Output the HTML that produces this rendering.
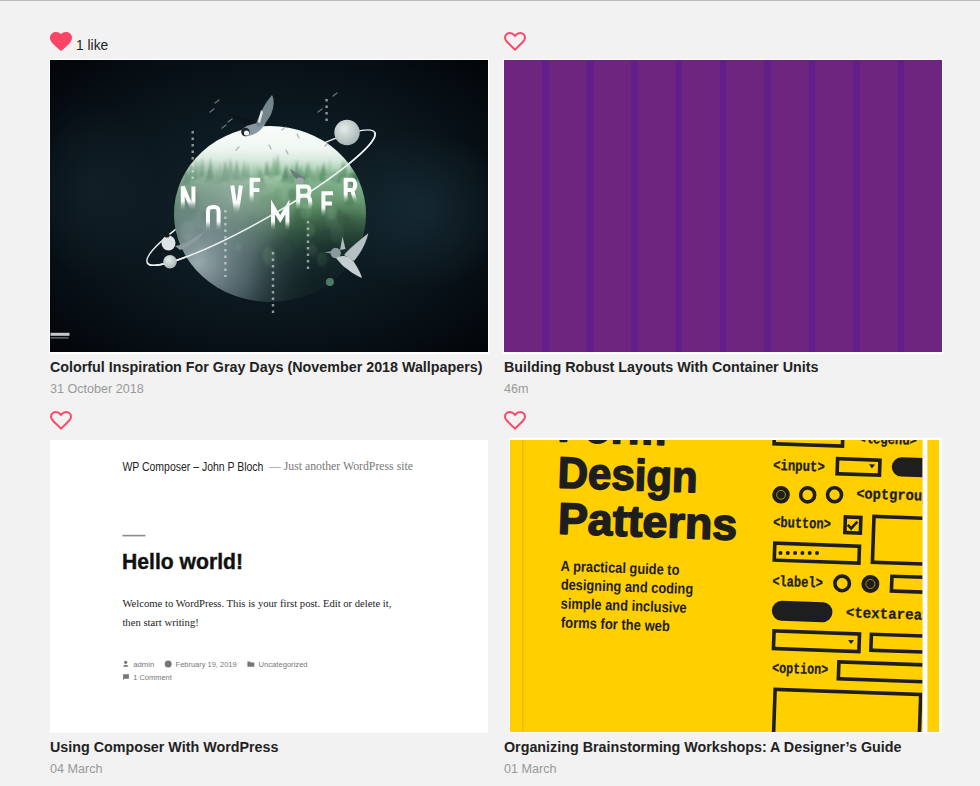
<!DOCTYPE html>
<html><head><meta charset="utf-8">
<style>
html,body{margin:0;padding:0;}
body{width:980px;height:786px;background:#f2f2f2;position:relative;overflow:hidden;font-family:"Liberation Sans",sans-serif;}
.topline{position:absolute;left:0;top:0;width:980px;height:1px;background:#bdbdbd;}
.heart{position:absolute;width:22px;height:19px;}
.likes{position:absolute;left:76px;top:38px;font-size:13.8px;color:#222;line-height:16px;white-space:nowrap;}
.frame{position:absolute;background:#fff;}
.img{position:absolute;overflow:hidden;}
.title{position:absolute;font-weight:bold;font-size:14.3px;color:#222;line-height:16px;white-space:nowrap;}
.date{position:absolute;font-size:12.6px;color:#999;line-height:14px;white-space:nowrap;}
</style></head><body>
<div class="topline"></div>

<!-- ROW 1 -->
<svg class="heart" style="left:50px;top:32px" viewBox="2 3 20 18.35" preserveAspectRatio="none"><path fill="#fb4466" d="M12 21.35l-1.45-1.32C5.4 15.36 2 12.28 2 8.5 2 5.42 4.42 3 7.5 3c1.740 0 3.41.81 4.5 2.09C13.09 3.81 14.76 3 16.5 3 19.58 3 22 5.42 22 8.5c0 3.78-3.4 6.86-8.55 11.54L12 21.35z"/></svg>
<div class="likes">1 like</div>
<svg class="heart" style="left:504px;top:32px" viewBox="0 0 22 19"><path fill="none" stroke="#fb4466" stroke-width="2" d="M11 17.6 L3.2 10 C1.6 8.4 1 7.2 1 5.8 1 3.2 3 1 5.8 1 7.8 1 9.6 2.2 11 3.8 12.4 2.2 14.2 1 16.2 1 19 1 21 3.2 21 5.8 21 7.2 20.4 8.4 18.8 10 Z"/></svg>

<div class="frame" style="left:49px;top:59px;width:440px;height:295px"></div>
<div class="img" style="left:50px;top:60px;width:438px;height:292px;background:#0a141b"><svg width="438" height="292" viewBox="0 0 438 292" style="display:block">
<defs>
<radialGradient id="nbg" cx="0.5" cy="0.5" r="0.7">
<stop offset="0" stop-color="#13242a"/><stop offset="0.45" stop-color="#0c1920"/><stop offset="0.8" stop-color="#060d13"/><stop offset="1" stop-color="#020508"/>
</radialGradient>
<linearGradient id="sph" x1="0" y1="0" x2="0" y2="1">
<stop offset="0" stop-color="#f8fcfa"/><stop offset="0.13" stop-color="#f0f7f2"/><stop offset="0.19" stop-color="#d9eadf"/>
<stop offset="0.26" stop-color="#a7cdb0"/><stop offset="0.34" stop-color="#7eae88"/><stop offset="0.46" stop-color="#5f9168"/>
<stop offset="0.6" stop-color="#3a6247"/><stop offset="0.72" stop-color="#26443b"/><stop offset="0.85" stop-color="#1b3031"/><stop offset="1" stop-color="#142427"/>
</linearGradient>
<radialGradient id="fog" cx="0.3" cy="0.42" r="0.35">
<stop offset="0" stop-color="#dfe9e4" stop-opacity="0.45"/><stop offset="1" stop-color="#dfe9e4" stop-opacity="0"/>
</radialGradient>
<radialGradient id="sphL" cx="0.12" cy="0.78" r="0.6">
<stop offset="0" stop-color="#a8b7bc" stop-opacity="0.9"/><stop offset="0.45" stop-color="#72858d" stop-opacity="0.6"/><stop offset="1" stop-color="#4a5b60" stop-opacity="0"/>
</radialGradient>
<radialGradient id="sphR" cx="0.88" cy="0.92" r="0.5">
<stop offset="0" stop-color="#0e1c20" stop-opacity="0.95"/><stop offset="1" stop-color="#0e1c20" stop-opacity="0"/>
</radialGradient>
<linearGradient id="let" x1="0" y1="0" x2="0" y2="1">
<stop offset="0" stop-color="#fff"/><stop offset="0.58" stop-color="#fff" stop-opacity="0.97"/><stop offset="0.76" stop-color="#fff" stop-opacity="0.3"/><stop offset="0.92" stop-color="#fff" stop-opacity="0"/>
</linearGradient>
<radialGradient id="ball" cx="0.4" cy="0.35" r="0.7">
<stop offset="0" stop-color="#e3ebe9"/><stop offset="1" stop-color="#a3b4b2"/>
</radialGradient>
<radialGradient id="haze"><stop offset="0" stop-color="#1d3540" stop-opacity="0.55"/><stop offset="1" stop-color="#1d3540" stop-opacity="0"/></radialGradient>
<filter id="blur" x="-10%" y="-10%" width="120%" height="120%"><feGaussianBlur stdDeviation="1.2"/></filter>
<clipPath id="front"><rect x="0" y="137.6" width="438" height="40"/></clipPath>
<clipPath id="sclip"><ellipse cx="220" cy="154" rx="96" ry="88"/></clipPath>
</defs>
<rect width="438" height="292" fill="url(#nbg)"/>
<ellipse cx="370" cy="150" rx="90" ry="80" fill="url(#haze)"/>
<ellipse cx="40" cy="130" rx="70" ry="90" fill="url(#haze)" opacity="0.6"/>
<ellipse cx="211" cy="137.6" rx="131" ry="20.5" transform="rotate(-29.85 211 137.6)" fill="none" stroke="#e8eeee" stroke-width="1.5"/>
<ellipse cx="220" cy="154" rx="96" ry="88" fill="url(#sph)"/>
<g clip-path="url(#sclip)">
<g filter="url(#blur)"><path d="M123.3 97.7 L126.0 116.5 L120.6 116.5 Z" fill="#3f7a50" opacity="0.36"/>
<path d="M126.4 106.7 L130.0 120.1 L122.8 120.1 Z" fill="#3f7a50" opacity="0.32"/>
<path d="M132.6 97.5 L137.5 115.6 L127.7 115.6 Z" fill="#3f7a50" opacity="0.42"/>
<path d="M136.2 111.3 L140.8 124.8 L131.5 124.8 Z" fill="#356a47" opacity="0.38"/>
<path d="M141.0 102.7 L145.2 120.7 L136.8 120.7 Z" fill="#3f7a50" opacity="0.42"/>
<path d="M145.6 100.8 L148.2 118.7 L142.9 118.7 Z" fill="#3f7a50" opacity="0.44"/>
<path d="M149.2 100.3 L152.8 120.3 L145.5 120.3 Z" fill="#5b9a68" opacity="0.36"/>
<path d="M152.4 96.8 L155.1 116.8 L149.7 116.8 Z" fill="#356a47" opacity="0.41"/>
<path d="M159.1 106.7 L164.1 122.3 L154.2 122.3 Z" fill="#3f7a50" opacity="0.40"/>
<path d="M160.5 97.0 L164.0 118.4 L156.9 118.4 Z" fill="#3f7a50" opacity="0.48"/>
<path d="M166.3 107.9 L170.5 123.8 L162.1 123.8 Z" fill="#5b9a68" opacity="0.42"/>
<path d="M170.0 101.9 L173.7 123.4 L166.3 123.4 Z" fill="#3f7a50" opacity="0.27"/>
<path d="M175.2 99.5 L179.8 121.5 L170.7 121.5 Z" fill="#356a47" opacity="0.46"/>
<path d="M180.1 97.0 L183.5 118.5 L176.8 118.5 Z" fill="#3f7a50" opacity="0.40"/>
<path d="M181.7 98.2 L185.2 117.9 L178.2 117.9 Z" fill="#5b9a68" opacity="0.27"/>
<path d="M186.8 99.5 L191.3 120.5 L182.2 120.5 Z" fill="#356a47" opacity="0.46"/>
<path d="M193.1 105.4 L196.2 121.8 L190.1 121.8 Z" fill="#3f7a50" opacity="0.30"/>
<path d="M194.3 100.0 L198.3 117.3 L190.4 117.3 Z" fill="#356a47" opacity="0.33"/>
<path d="M198.2 101.9 L201.5 120.3 L194.9 120.3 Z" fill="#4a8a5a" opacity="0.46"/>
<path d="M203.9 102.1 L206.5 121.2 L201.2 121.2 Z" fill="#5b9a68" opacity="0.37"/>
<path d="M207.6 103.2 L210.6 119.8 L204.6 119.8 Z" fill="#4a8a5a" opacity="0.38"/>
<path d="M210.6 107.1 L214.6 121.0 L206.7 121.0 Z" fill="#3f7a50" opacity="0.53"/>
<path d="M216.9 100.8 L220.3 115.7 L213.4 115.7 Z" fill="#356a47" opacity="0.54"/>
<path d="M221.0 105.7 L224.7 119.7 L217.3 119.7 Z" fill="#5b9a68" opacity="0.39"/>
<path d="M224.0 96.7 L228.4 116.4 L219.7 116.4 Z" fill="#5b9a68" opacity="0.50"/>
<path d="M227.6 93.7 L231.5 115.2 L223.8 115.2 Z" fill="#4a8a5a" opacity="0.46"/>
<path d="M234.9 106.9 L239.0 122.6 L230.7 122.6 Z" fill="#3f7a50" opacity="0.46"/>
<path d="M236.4 104.2 L240.9 118.7 L232.0 118.7 Z" fill="#356a47" opacity="0.44"/>
<path d="M242.1 103.1 L245.0 122.9 L239.1 122.9 Z" fill="#4a8a5a" opacity="0.50"/>
<path d="M246.8 99.6 L250.1 117.3 L243.4 117.3 Z" fill="#3f7a50" opacity="0.55"/>
<path d="M251.2 105.0 L255.2 119.7 L247.1 119.7 Z" fill="#356a47" opacity="0.38"/>
<path d="M255.9 103.3 L259.4 124.9 L252.5 124.9 Z" fill="#4a8a5a" opacity="0.28"/>
<path d="M258.3 101.0 L263.2 118.4 L253.3 118.4 Z" fill="#3f7a50" opacity="0.39"/>
<path d="M263.2 109.2 L267.4 123.0 L259.1 123.0 Z" fill="#5b9a68" opacity="0.48"/>
<path d="M267.8 105.2 L272.3 119.8 L263.3 119.8 Z" fill="#356a47" opacity="0.28"/>
<path d="M272.8 105.0 L277.1 122.2 L268.4 122.2 Z" fill="#3f7a50" opacity="0.47"/>
<path d="M273.9 101.9 L278.6 116.3 L269.1 116.3 Z" fill="#4a8a5a" opacity="0.43"/>
<path d="M279.8 98.3 L282.7 119.7 L276.9 119.7 Z" fill="#4a8a5a" opacity="0.26"/>
<path d="M284.8 108.3 L289.2 122.3 L280.4 122.3 Z" fill="#4a8a5a" opacity="0.38"/>
<path d="M289.3 108.4 L292.4 123.3 L286.2 123.3 Z" fill="#356a47" opacity="0.40"/>
<path d="M293.1 100.4 L297.6 118.3 L288.5 118.3 Z" fill="#3f7a50" opacity="0.52"/>
<path d="M295.6 101.3 L300.4 119.6 L290.9 119.6 Z" fill="#5b9a68" opacity="0.50"/>
<path d="M301.9 101.9 L305.7 116.3 L298.1 116.3 Z" fill="#5b9a68" opacity="0.48"/>
<path d="M305.0 108.4 L307.9 122.8 L302.2 122.8 Z" fill="#3f7a50" opacity="0.42"/>
<path d="M308.1 102.2 L312.6 120.2 L303.6 120.2 Z" fill="#3f7a50" opacity="0.51"/>
<path d="M311.2 103.5 L314.0 116.9 L308.5 116.9 Z" fill="#5b9a68" opacity="0.42"/>
<ellipse cx="270.6" cy="192.8" rx="4.7" ry="6.7" fill="#2a4f39" opacity="0.39"/>
<ellipse cx="242.1" cy="134.4" rx="4.0" ry="5.7" fill="#2a4f39" opacity="0.28"/>
<ellipse cx="218.4" cy="195.2" rx="5.7" ry="8.2" fill="#6fa07a" opacity="0.38"/>
<ellipse cx="295.2" cy="134.6" rx="4.7" ry="6.7" fill="#88b593" opacity="0.18"/>
<ellipse cx="211.8" cy="123.9" rx="3.8" ry="5.4" fill="#2f5c3d" opacity="0.20"/>
<ellipse cx="186.0" cy="128.0" rx="6.1" ry="8.7" fill="#6fa07a" opacity="0.19"/>
<ellipse cx="293.3" cy="197.3" rx="3.7" ry="5.3" fill="#2f5c3d" opacity="0.25"/>
<ellipse cx="220.1" cy="199.2" rx="6.3" ry="9.0" fill="#3c6e4a" opacity="0.33"/>
<ellipse cx="313.9" cy="151.1" rx="4.6" ry="6.5" fill="#6fa07a" opacity="0.23"/>
<ellipse cx="263.6" cy="119.6" rx="5.1" ry="7.3" fill="#88b593" opacity="0.33"/>
<ellipse cx="201.1" cy="160.4" rx="4.0" ry="5.8" fill="#2f5c3d" opacity="0.18"/>
<ellipse cx="299.9" cy="136.7" rx="6.5" ry="9.3" fill="#2f5c3d" opacity="0.22"/>
<ellipse cx="137.3" cy="181.9" rx="3.9" ry="5.6" fill="#3c6e4a" opacity="0.35"/>
<ellipse cx="287.2" cy="173.4" rx="6.8" ry="9.7" fill="#88b593" opacity="0.19"/>
<ellipse cx="300.0" cy="164.8" rx="5.7" ry="8.2" fill="#2f5c3d" opacity="0.22"/>
<ellipse cx="277.9" cy="133.0" rx="6.6" ry="9.4" fill="#6fa07a" opacity="0.38"/>
<ellipse cx="247.4" cy="183.7" rx="3.2" ry="4.5" fill="#3c6e4a" opacity="0.17"/>
<ellipse cx="289.6" cy="155.2" rx="4.2" ry="6.0" fill="#2a4f39" opacity="0.25"/>
<ellipse cx="299.4" cy="169.0" rx="3.0" ry="4.3" fill="#3c6e4a" opacity="0.38"/>
<ellipse cx="309.3" cy="139.5" rx="3.6" ry="5.1" fill="#6fa07a" opacity="0.31"/>
<ellipse cx="228.3" cy="134.9" rx="4.7" ry="6.7" fill="#3c6e4a" opacity="0.22"/>
<ellipse cx="278.7" cy="199.5" rx="3.0" ry="4.2" fill="#2f5c3d" opacity="0.33"/>
<ellipse cx="231.9" cy="133.5" rx="4.8" ry="6.8" fill="#88b593" opacity="0.18"/>
<ellipse cx="281.5" cy="153.4" rx="4.9" ry="7.0" fill="#88b593" opacity="0.39"/>
<ellipse cx="186.9" cy="135.6" rx="3.8" ry="5.4" fill="#3c6e4a" opacity="0.36"/>
<ellipse cx="260.7" cy="170.2" rx="4.5" ry="6.4" fill="#6fa07a" opacity="0.40"/>
<ellipse cx="284.8" cy="119.2" rx="5.4" ry="7.8" fill="#6fa07a" opacity="0.26"/>
<ellipse cx="140.2" cy="172.5" rx="4.4" ry="6.3" fill="#2a4f39" opacity="0.32"/>
<ellipse cx="182.2" cy="137.9" rx="4.0" ry="5.8" fill="#88b593" opacity="0.20"/>
<ellipse cx="179.8" cy="118.3" rx="4.3" ry="6.2" fill="#6fa07a" opacity="0.39"/>
<ellipse cx="231.2" cy="138.0" rx="6.9" ry="9.8" fill="#6fa07a" opacity="0.20"/>
<ellipse cx="163.8" cy="145.5" rx="3.2" ry="4.5" fill="#6fa07a" opacity="0.28"/>
<ellipse cx="167.2" cy="159.4" rx="2.8" ry="4.0" fill="#6fa07a" opacity="0.35"/>
<ellipse cx="156.6" cy="166.1" rx="4.5" ry="6.4" fill="#6fa07a" opacity="0.23"/>
<ellipse cx="173.1" cy="166.0" rx="5.0" ry="7.2" fill="#3c6e4a" opacity="0.31"/>
<ellipse cx="262.5" cy="190.1" rx="4.4" ry="6.3" fill="#6fa07a" opacity="0.33"/>
<ellipse cx="221.4" cy="141.3" rx="5.4" ry="7.7" fill="#3c6e4a" opacity="0.16"/>
<ellipse cx="284.5" cy="191.1" rx="5.4" ry="7.8" fill="#2a4f39" opacity="0.18"/>
<ellipse cx="226.9" cy="159.4" rx="6.3" ry="9.0" fill="#2f5c3d" opacity="0.36"/>
<ellipse cx="238.1" cy="191.2" rx="5.7" ry="8.1" fill="#3c6e4a" opacity="0.17"/>
<ellipse cx="137.7" cy="170.2" rx="6.8" ry="9.8" fill="#88b593" opacity="0.36"/>
<ellipse cx="233.3" cy="169.5" rx="5.4" ry="7.8" fill="#3c6e4a" opacity="0.27"/>
<ellipse cx="130.6" cy="183.4" rx="5.9" ry="8.5" fill="#2a4f39" opacity="0.37"/>
<ellipse cx="147.0" cy="161.1" rx="5.9" ry="8.5" fill="#88b593" opacity="0.21"/>
<ellipse cx="143.8" cy="139.8" rx="5.9" ry="8.4" fill="#3c6e4a" opacity="0.21"/>
<ellipse cx="250.2" cy="155.7" rx="6.4" ry="9.1" fill="#2f5c3d" opacity="0.27"/>
<ellipse cx="256.5" cy="180.9" rx="5.4" ry="7.7" fill="#3c6e4a" opacity="0.17"/>
<ellipse cx="157.3" cy="138.8" rx="5.9" ry="8.5" fill="#6fa07a" opacity="0.31"/>
<ellipse cx="154.7" cy="157.6" rx="4.8" ry="6.9" fill="#2f5c3d" opacity="0.32"/>
<ellipse cx="255.0" cy="141.9" rx="5.0" ry="7.1" fill="#88b593" opacity="0.27"/>
<ellipse cx="271.9" cy="199.5" rx="5.1" ry="7.3" fill="#6fa07a" opacity="0.39"/>
<ellipse cx="303.2" cy="119.4" rx="4.7" ry="6.8" fill="#2a4f39" opacity="0.39"/>
<ellipse cx="213.1" cy="140.0" rx="3.7" ry="5.3" fill="#3c6e4a" opacity="0.17"/>
<ellipse cx="146.7" cy="179.3" rx="3.9" ry="5.6" fill="#6fa07a" opacity="0.18"/>
<ellipse cx="281.7" cy="159.7" rx="6.5" ry="9.3" fill="#6fa07a" opacity="0.21"/>
<ellipse cx="296.1" cy="157.9" rx="2.9" ry="4.1" fill="#2f5c3d" opacity="0.39"/>
<ellipse cx="256.1" cy="151.2" rx="5.9" ry="8.4" fill="#88b593" opacity="0.24"/>
<ellipse cx="188.5" cy="186.9" rx="2.8" ry="4.0" fill="#6fa07a" opacity="0.36"/>
<ellipse cx="152.2" cy="194.0" rx="5.8" ry="8.3" fill="#6fa07a" opacity="0.21"/>
<ellipse cx="142.0" cy="150.0" rx="6.5" ry="9.2" fill="#2f5c3d" opacity="0.24"/></g>
<ellipse cx="220" cy="154" rx="96" ry="88" fill="url(#fog)"/>
<ellipse cx="220" cy="154" rx="96" ry="88" fill="url(#sphL)"/>
<ellipse cx="220" cy="154" rx="96" ry="88" fill="url(#sphR)"/>
</g>
<path d="M132.8 151.5 V126.5 L143.4 151.5 V126.5" fill="none" stroke="url(#let)" stroke-width="4.0" stroke-linejoin="miter"/>
<path d="M163.3 146.9 C169.1 146.9 168.6 149.9 168.6 153.9 V171.9 M158.0 171.9 V153.9 C158.0 149.9 157.5 146.9 163.3 146.9" fill="none" stroke="url(#let)" stroke-width="4.0" stroke-linejoin="miter"/>
<path d="M182.3 125.5 L186.60000000000002 155.5 L190.9 125.5" fill="none" stroke="url(#let)" stroke-width="4.0" stroke-linejoin="miter"/>
<path d="M210.3 119.8 H201.6 V144.8 H210.3 M201.6 129.95 H209.3" fill="none" stroke="url(#let)" stroke-width="4.0" stroke-linejoin="miter"/>
<path d="M223.0 171.9 V146.9 L230.2 159.05 L237.4 146.9 V171.9" fill="none" stroke="url(#let)" stroke-width="4.0" stroke-linejoin="miter"/>
<path d="M248.2 151.5 V126.5 H256.6 C260.6 126.5 260.6 135.65 256.6 135.65 H248.2 M256.6 135.65 C261.6 135.65 261.6 151.5 256.6 151.5 H248.2" fill="none" stroke="url(#let)" stroke-width="4.0" stroke-linejoin="miter"/>
<path d="M283.0 133.3 H273.4 V158.3 H283.0 M273.4 143.45000000000002 H282.0" fill="none" stroke="url(#let)" stroke-width="4.0" stroke-linejoin="miter"/>
<path d="M295.7 144.8 V119.8 H302.2 C306.2 119.8 306.2 129.95 302.2 129.95 H295.7 M302.2 129.95 L306.2 144.8" fill="none" stroke="url(#let)" stroke-width="4.0" stroke-linejoin="miter"/>
<g transform="rotate(-29.85 211 137.6)"><ellipse cx="211" cy="137.6" rx="131" ry="20.5" fill="none" stroke="#eef2f2" stroke-width="1.6" clip-path="url(#front)"/></g>
<circle cx="297" cy="72.5" r="12.7" fill="url(#ball)"/>
<circle cx="120" cy="201.8" r="6.8" fill="url(#ball)"/>
<circle cx="279.9" cy="222" r="4" fill="#4f7a66"/>
<!-- top bird -->
<path d="M178 53 L 203 61 L 201 67 L 190 62 Z" fill="#0b1519"/>
<path d="M191 71 C 194 65, 205 63, 216 62 C 214 68, 206 75, 198 76 C 194 77, 191 75, 191 71 Z" fill="#8796a0"/>
<path d="M206 64 C 210 52, 216 42, 222 35 C 225 40, 224 50, 219 58 C 216 63, 212 66, 208 67 Z" fill="#74868c"/>
<path d="M208 62 L 211 50 L 213 52 L 210 63 Z" fill="#dfe6e8"/>
<circle cx="195.5" cy="72" r="4.2" fill="#1a2326"/><circle cx="196.5" cy="73" r="2.6" fill="#f0f3f3"/>
<!-- hummingbird -->
<path d="M274 192.3 L 283 191 L 284 194 Z" fill="#8a9a9e"/>
<circle cx="285.7" cy="193" r="5.2" fill="#8a9a9e"/>
<path d="M286 198 C 292 194, 300 196, 304 202 C 308 208, 311 214, 312 218 C 306 216, 298 210, 292 205 Z" fill="#c5ced0"/>
<path d="M290 190 L 292.5 176.6 L 295.5 189 Z" fill="#aebabc"/>
<path d="M294 195 C 300 188, 310 180, 318.3 173.3 C 316 184, 310 194, 304 201 Z" fill="#b5c0c2"/>
<!-- left bird -->
<path d="M125 186 C 135 184, 145 178, 153.6 171.4 C 150 178, 142 186, 130 190 Z" fill="#8d9a9e"/>
<ellipse cx="118.5" cy="183" rx="7" ry="7.5" fill="#dde3e4"/>
<circle cx="117" cy="175" r="2.6" fill="#111a1d"/>
<path d="M240 109 C 242 114, 246 120, 250 122 C 254 122, 256 120, 254 117 C 250 116, 246 112, 240 109 Z" fill="#6c7a7e"/><ellipse cx="250" cy="120" rx="4" ry="2.6" fill="#9aa6a9"/>
<g stroke="#8e9ca0" stroke-width="1.3" fill="none" opacity="0.7" stroke-linecap="round"><path d="M160 52 l4 -3"/><path d="M165 43 l4 -3"/><path d="M172 68 l4 -3"/><path d="M178 62 l4 -3"/><path d="M268 52 l4 -3"/><path d="M283 36 l4 -3"/><path d="M275 86 l3 -3"/><path d="M219 85 l2 4"/><path d="M236 90 l2 4"/><path d="M247 74 l2 4"/><path d="M186 90 l3 -3"/><path d="M232 70 l3 -3"/></g>
<g stroke="#e3eae8" stroke-width="2.4" stroke-dasharray="2.5 4" opacity="0.6">
<line x1="142.7" y1="71" x2="142.7" y2="119"/>
<line x1="175.4" y1="150" x2="175.4" y2="217"/>
<line x1="223" y1="192" x2="223" y2="255"/>
<line x1="258" y1="161" x2="258" y2="211"/>
<line x1="276.6" y1="39" x2="276.6" y2="64"/>
</g>
<g fill="#e6ecec"><rect x="0.5" y="272.8" width="19" height="3" opacity="0.85"/><rect x="0.5" y="277.2" width="18" height="1.4" opacity="0.45"/></g>
</svg></div>

<div class="frame" style="left:503px;top:59px;width:440px;height:295px"></div>
<div class="img" style="left:504px;top:60px;width:438px;height:292px;background:#6e2580"><svg width="438" height="292" viewBox="0 0 438 292" style="display:block">
<rect width="438" height="292" fill="#6e2580"/>
<g fill="#621e8a">
<rect x="38.3" y="0" width="6.5" height="292"/><rect x="82.7" y="0" width="6.5" height="292"/><rect x="127.1" y="0" width="6.5" height="292"/>
<rect x="171.5" y="0" width="6.5" height="292"/><rect x="215.9" y="0" width="6.5" height="292"/><rect x="260.3" y="0" width="6.5" height="292"/>
<rect x="304.7" y="0" width="6.5" height="292"/><rect x="349.1" y="0" width="6.5" height="292"/><rect x="393.5" y="0" width="6.5" height="292"/>
</g>
</svg>
</div>

<div class="title" style="left:50px;top:359px">Colorful Inspiration For Gray Days (November 2018 Wallpapers)</div>
<div class="date" style="left:50px;top:382px">31 October 2018</div>
<div class="title" style="left:504px;top:359px">Building Robust Layouts With Container Units</div>
<div class="date" style="left:504px;top:382px">46m</div>

<!-- ROW 2 -->
<svg class="heart" style="left:50px;top:411px" viewBox="0 0 22 19"><path fill="none" stroke="#fb4466" stroke-width="2" d="M11 17.6 L3.2 10 C1.6 8.4 1 7.2 1 5.8 1 3.2 3 1 5.8 1 7.8 1 9.6 2.2 11 3.8 12.4 2.2 14.2 1 16.2 1 19 1 21 3.2 21 5.8 21 7.2 20.4 8.4 18.8 10 Z"/></svg>
<svg class="heart" style="left:504px;top:411px" viewBox="0 0 22 19"><path fill="none" stroke="#fb4466" stroke-width="2" d="M11 17.6 L3.2 10 C1.6 8.4 1 7.2 1 5.8 1 3.2 3 1 5.8 1 7.8 1 9.6 2.2 11 3.8 12.4 2.2 14.2 1 16.2 1 19 1 21 3.2 21 5.8 21 7.2 20.4 8.4 18.8 10 Z"/></svg>

<div class="frame" style="left:50px;top:440px;width:438px;height:293px;background:#fafafa"></div>
<div class="img" style="left:50px;top:440px;width:438px;height:292px;background:#fff"><svg width="438" height="292" viewBox="0 0 438 292" style="display:block">
<rect width="438" height="292" fill="#fff"/>
<text x="72.4" y="30.6" font-family="Liberation Sans" font-size="12" textLength="141" lengthAdjust="spacingAndGlyphs" fill="#222">WP Composer – John P Bloch</text>
<text x="219" y="30.2" font-family="Liberation Serif" font-size="12" textLength="144" lengthAdjust="spacingAndGlyphs" fill="#777">— Just another WordPress site</text>
<rect x="72.4" y="94.8" width="23" height="1.6" fill="#8c8c8c"/>
<text x="72" y="129.2" font-family="Liberation Sans" font-weight="bold" font-size="21.5" textLength="121" lengthAdjust="spacingAndGlyphs" fill="#111" stroke="#111" stroke-width="0.4">Hello world!</text>
<text x="72.4" y="167.2" font-family="Liberation Serif" font-size="10.8" textLength="269" lengthAdjust="spacingAndGlyphs" fill="#222">Welcome to WordPress. This is your first post. Edit or delete it,</text>
<text x="72.4" y="185.8" font-family="Liberation Serif" font-size="10.8" textLength="76.4" lengthAdjust="spacingAndGlyphs" fill="#222">then start writing!</text>
<g fill="#767676" font-family="Liberation Sans" font-size="7.6">
<text x="83.2" y="226.7" textLength="21" lengthAdjust="spacingAndGlyphs">admin</text>
<text x="125.6" y="226.7" textLength="61" lengthAdjust="spacingAndGlyphs">February 19, 2019</text>
<text x="208.6" y="226.7" textLength="49" lengthAdjust="spacingAndGlyphs">Uncategorized</text>
<text x="83.2" y="239.6" textLength="38.6" lengthAdjust="spacingAndGlyphs">1 Comment</text>
<circle cx="75.7" cy="222.3" r="1.6"/><path d="M73.1 226.7 a2.6 2 0 0 1 5.2 0 z"/>
<circle cx="118.2" cy="224" r="3.5"/>
<path d="M197.4 221.5 h2.5 l1 1 h3.4 v4.2 h-6.9 z"/>
<path d="M73.1 234.2 h5.8 v4.5 h-4.5 l-1.3 1.3 z"/>
</g>
</svg>
</div>

<div class="frame" style="left:509px;top:438px;width:433px;height:295px"></div>
<div class="img" style="left:510px;top:440px;width:429px;height:292px;background:#ffd000"><svg width="429" height="292" viewBox="0 0 429 292" style="display:block">
<rect width="429" height="292" fill="#ffcf00"/>
<rect x="12" y="0" width="1.5" height="292" fill="#e8bd00"/>
<svg x="0" y="0" width="412.6" height="292" overflow="hidden">
<g transform="rotate(2.0 214.5 146)">
<text x="42.4" y="7.2" font-family="Liberation Sans" font-weight="bold" font-size="44" textLength="108.9" lengthAdjust="spacingAndGlyphs" fill="#1e1e1e" stroke="#1e1e1e" stroke-width="1.6" stroke-linejoin="round">Form</text>
<text x="44.0" y="53.4" font-family="Liberation Sans" font-weight="bold" font-size="44" textLength="139.9" lengthAdjust="spacingAndGlyphs" fill="#1e1e1e" stroke="#1e1e1e" stroke-width="1.6" stroke-linejoin="round">Design</text>
<text x="45.7" y="99.4" font-family="Liberation Sans" font-weight="bold" font-size="44" textLength="179.4" lengthAdjust="spacingAndGlyphs" fill="#1e1e1e" stroke="#1e1e1e" stroke-width="1.6" stroke-linejoin="round">Patterns</text>
<text x="50.2" y="136.7" font-family="Liberation Sans" font-weight="bold" font-size="15" textLength="118.7" lengthAdjust="spacingAndGlyphs" fill="#1e1e1e">A practical guide to</text>
<text x="50.9" y="155.2" font-family="Liberation Sans" font-weight="bold" font-size="15" textLength="132.4" lengthAdjust="spacingAndGlyphs" fill="#1e1e1e">designing and coding</text>
<text x="51.5" y="174.1" font-family="Liberation Sans" font-weight="bold" font-size="15" textLength="125.9" lengthAdjust="spacingAndGlyphs" fill="#1e1e1e">simple and inclusive</text>
<text x="52.2" y="193.2" font-family="Liberation Sans" font-weight="bold" font-size="15" textLength="109.1" lengthAdjust="spacingAndGlyphs" fill="#1e1e1e">forms for the web</text>
<rect x="259.1" y="-23.0" width="68.4" height="25.2" rx="0" fill="none" stroke="#1e1e1e" stroke-width="3.6"/>
<text x="343.1" y="-1.8" font-family="Liberation Mono" font-weight="bold" font-size="15" textLength="58.7" lengthAdjust="spacingAndGlyphs" fill="#1e1e1e" stroke="#1e1e1e" stroke-width="0.3" stroke-linejoin="round">&lt;legend&gt;</text>
<text x="258.8" y="28.2" font-family="Liberation Mono" font-weight="bold" font-size="15" textLength="51.7" lengthAdjust="spacingAndGlyphs" fill="#1e1e1e" stroke="#1e1e1e" stroke-width="0.3" stroke-linejoin="round">&lt;input&gt;</text>
<rect x="323.1" y="14.8" width="42.4" height="15.0" rx="0" fill="none" stroke="#1e1e1e" stroke-width="3.6"/>
<path d="M354.7 19.4 h6 l-3 4 z" fill="#1e1e1e"/>
<rect x="377.5" y="11.2" width="58.2" height="19.2" rx="9.6" fill="#1e1e1e"/>
<circle cx="267.8" cy="52.9" r="8.8" fill="#1e1e1e"/>
<circle cx="267.8" cy="52.9" r="4.4" fill="none" stroke="#c9a400" stroke-width="0.8"/>
<circle cx="294.4" cy="52.0" r="7.0" fill="none" stroke="#1e1e1e" stroke-width="3.6"/>
<circle cx="321.3" cy="51.0" r="7.0" fill="none" stroke="#1e1e1e" stroke-width="3.6"/>
<text x="343.0" y="53.6" font-family="Liberation Mono" font-weight="bold" font-size="15" textLength="82.2" lengthAdjust="spacingAndGlyphs" fill="#1e1e1e" stroke="#1e1e1e" stroke-width="0.3" stroke-linejoin="round">&lt;optgroup&gt;</text>
<text x="260.8" y="85.2" font-family="Liberation Mono" font-weight="bold" font-size="15" textLength="58.0" lengthAdjust="spacingAndGlyphs" fill="#1e1e1e" stroke="#1e1e1e" stroke-width="0.3" stroke-linejoin="round">&lt;button&gt;</text>
<rect x="332.9" y="72.8" width="15.5" height="15.6" rx="0" fill="none" stroke="#1e1e1e" stroke-width="3.6"/>
<path d="M335.6 80.6 l3.5 3.5 l6 -7" fill="none" stroke="#1e1e1e" stroke-width="2.6"/>
<rect x="361.5" y="71.3" width="75.0" height="45.8" rx="0" fill="none" stroke="#1e1e1e" stroke-width="3.6"/>
<rect x="263.3" y="101.5" width="84.7" height="16.9" rx="0" fill="none" stroke="#1e1e1e" stroke-width="3.6"/>
<circle cx="269.3" cy="111.1" r="2" fill="#1e1e1e"/>
<circle cx="276.6" cy="110.8" r="2" fill="#1e1e1e"/>
<circle cx="283.9" cy="110.6" r="2" fill="#1e1e1e"/>
<circle cx="291.2" cy="110.3" r="2" fill="#1e1e1e"/>
<circle cx="298.5" cy="110.0" r="2" fill="#1e1e1e"/>
<circle cx="305.8" cy="109.8" r="2" fill="#1e1e1e"/>
<text x="262.1" y="144.2" font-family="Liberation Mono" font-weight="bold" font-size="15" textLength="50.5" lengthAdjust="spacingAndGlyphs" fill="#1e1e1e" stroke="#1e1e1e" stroke-width="0.3" stroke-linejoin="round">&lt;label&gt;</text>
<circle cx="332.0" cy="139.3" r="7.3" fill="none" stroke="#1e1e1e" stroke-width="3.6"/>
<circle cx="360.2" cy="138.9" r="9.0" fill="#1e1e1e"/>
<circle cx="360.2" cy="138.9" r="4.5" fill="none" stroke="#c9a400" stroke-width="0.8"/>
<rect x="381.5" y="130.4" width="56.5" height="14.8" rx="0" fill="none" stroke="#1e1e1e" stroke-width="3.6"/>
<rect x="262.7" y="158.7" width="60.6" height="20.1" rx="10" fill="#1e1e1e"/>
<text x="336.7" y="172.8" font-family="Liberation Mono" font-weight="bold" font-size="15" textLength="84.7" lengthAdjust="spacingAndGlyphs" fill="#1e1e1e" stroke="#1e1e1e" stroke-width="0.3" stroke-linejoin="round">&lt;textarea&gt;</text>
<rect x="265.6" y="189.2" width="85.5" height="17.6" rx="0" fill="none" stroke="#1e1e1e" stroke-width="3.6"/>
<path d="M339.9 195.6 h6 l-3 4 z" fill="#1e1e1e"/>
<rect x="363.0" y="189.1" width="77.1" height="15.9" rx="0" fill="none" stroke="#1e1e1e" stroke-width="3.6"/>
<text x="265.1" y="230.7" font-family="Liberation Mono" font-weight="bold" font-size="15" textLength="56.0" lengthAdjust="spacingAndGlyphs" fill="#1e1e1e" stroke="#1e1e1e" stroke-width="0.3" stroke-linejoin="round">&lt;option&gt;</text>
<rect x="331.5" y="217.9" width="109.6" height="16.9" rx="0" fill="none" stroke="#1e1e1e" stroke-width="3.6"/>
<rect x="268.7" y="247.5" width="145.7" height="76.4" rx="0" fill="none" stroke="#1e1e1e" stroke-width="3.6"/>
</g>
</svg>
<rect x="412.6" y="0" width="4.8" height="292" fill="#fff"/>
</svg></div>

<div class="title" style="left:50px;top:739px">Using Composer With WordPress</div>
<div class="date" style="left:50px;top:762px">04 March</div>
<div class="title" style="left:504px;top:739px">Organizing Brainstorming Workshops: A Designer’s Guide</div>
<div class="date" style="left:504px;top:762px">01 March</div>

</body></html>
